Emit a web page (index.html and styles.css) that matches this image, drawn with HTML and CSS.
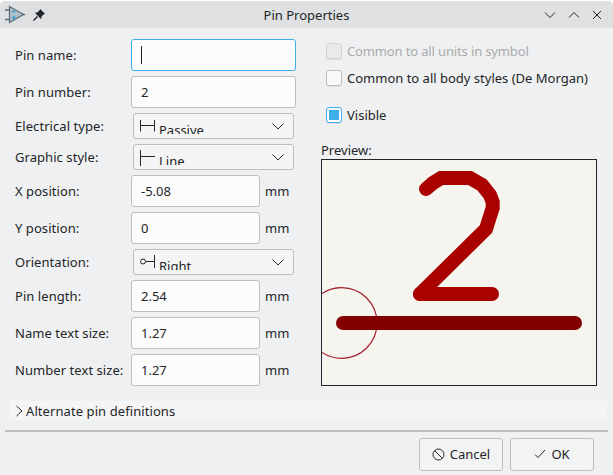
FILE: index.html
```html
<!DOCTYPE html>
<html lang="en">
<head>
  <meta charset="UTF-8" />
  <title>Pin Properties</title>
  <link rel="stylesheet" href="styles.css">
</head>
<body>
<div class="window">
  <div class="titlebar">
    <div class="title-left">
      <svg class="app-icon" width="20" height="20" viewBox="0 0 20 20">
        <path d="M4.5 1.5 L4.5 17.5 L18.5 9.5 Z" fill="#b4c0c8" stroke="#5b6b76" stroke-width="1.3"/>
        <path d="M0 5H4M0 14.5H4M18 9.5H20" stroke="#5b6b76" stroke-width="1.5"/>
        <path d="M7 6.5H10.5M7 12.5H10.5M8.75 10.7V14.3" stroke="#2f9ed8" stroke-width="1.3"/>
      </svg>
      <svg class="pin-icon" width="12" height="12" viewBox="0 0 12 12">
        <path d="M7.2 0 L12 4.8 L10.4 5.6 L8.4 7.8 L8.2 10.2 L1.8 3.8 L4.2 3.6 L6.4 1.6 Z" fill="#232629"/>
        <path d="M4.5 7.5 L0.5 11.5" stroke="#232629" stroke-width="1.4"/>
      </svg>
    </div>
    <div class="title-text">Pin Properties</div>
    <div class="title-btns">
      <svg width="12" height="8" viewBox="0 0 12 8"><path d="M1 1.5 L6 6.5 L11 1.5" class="line"/></svg>
      <svg width="12" height="8" viewBox="0 0 12 8"><path d="M1 6.5 L6 1.5 L11 6.5" class="line"/></svg>
      <svg width="10" height="10" viewBox="0 0 10 10"><path d="M1 1 L9 9 M9 1 L1 9" class="line"/></svg>
    </div>
  </div>

  <div class="content">
    <div class="form">
      <label>Pin name:</label>
      <div class="input wide focus"><span class="caret"></span></div>

      <label>Pin number:</label>
      <div class="input wide">2</div>

      <label>Electrical type:</label>
      <div class="select">
        <svg width="19" height="16" viewBox="0 0 19 16"><path d="M0.5 1V12.5M0.5 6.5H14.5M14.5 1V12.5" class="line"/></svg>
        <span class="select-text">Passive</span>
        <svg class="chev" width="12" height="7" viewBox="0 0 12 7"><path d="M0.5 0.5 L6 6 L11.5 0.5" class="line"/></svg>
      </div>

      <label>Graphic style:</label>
      <div class="select">
        <svg width="19" height="16" viewBox="0 0 19 16"><path d="M0.5 0V16M0.5 6.5H15" class="line"/></svg>
        <span class="select-text">Line</span>
        <svg class="chev" width="12" height="7" viewBox="0 0 12 7"><path d="M0.5 0.5 L6 6 L11.5 0.5" class="line"/></svg>
      </div>

      <label>X position:</label>
      <div class="with-unit"><div class="input">-5.08</div><span>mm</span></div>

      <label>Y position:</label>
      <div class="with-unit"><div class="input">0</div><span>mm</span></div>

      <label>Orientation:</label>
      <div class="select">
        <svg width="19" height="16" viewBox="0 0 19 16"><circle cx="3" cy="6.5" r="2.5" class="line"/><path d="M5.5 6.5H14.5M14.5 0V13" class="line"/></svg>
        <span class="select-text">Right</span>
        <svg class="chev" width="12" height="7" viewBox="0 0 12 7"><path d="M0.5 0.5 L6 6 L11.5 0.5" class="line"/></svg>
      </div>

      <label>Pin length:</label>
      <div class="with-unit"><div class="input">2.54</div><span>mm</span></div>

      <label>Name text size:</label>
      <div class="with-unit"><div class="input">1.27</div><span>mm</span></div>

      <label>Number text size:</label>
      <div class="with-unit"><div class="input">1.27</div><span>mm</span></div>
    </div>

    <div class="side">
      <div class="check disabled"><span class="box"></span>Common to all units in symbol</div>
      <div class="check"><span class="box"></span>Common to all body styles (De Morgan)</div>
      <div class="check visible"><span class="box on"><i></i></span>Visible</div>
      <div class="preview-label">Preview:</div>
      <div class="preview">
        <svg width="275" height="225" viewBox="322 160 275 225">
          <circle cx="341.7" cy="323" r="35.3" fill="none" stroke="#a3202c" stroke-width="1.2"/>
          <path d="M343 323H575" fill="none" stroke="#840000" stroke-width="14" stroke-linecap="round"/>
          <path d="M426 189L433 183L441 178H470L482 185L490 195L492.7 202V208L486 229L420 294" fill="none" stroke="#a90000" stroke-width="14" stroke-linecap="round" stroke-linejoin="miter"/>
          <path d="M420 294H492" fill="none" stroke="#a90000" stroke-width="14" stroke-linecap="round"/>
        </svg>
      </div>
    </div>
  </div>

  <div class="alt-bar">
    <svg width="9" height="12" viewBox="0 0 9 12"><path d="M1.5 1 L7 6 L1.5 11" class="line"/></svg>
    Alternate pin definitions
  </div>
  <div class="sep"></div>

  <div class="buttons">
    <div class="btn">
      <svg width="13" height="13" viewBox="0 0 13 13"><circle cx="6.5" cy="6.5" r="5.5" class="line"/><path d="M2.7 2.7 L10.3 10.3" class="line"/></svg>
      Cancel
    </div>
    <div class="btn">
      <svg width="12" height="10" viewBox="0 0 12 10"><path d="M1 5.5 L4 8.5 L11 1" class="line"/></svg>
      OK
    </div>
  </div>
</div>
</body>
</html>
```

FILE: styles.css
```css
html, body {
  margin: 0;
  padding: 0;
  background: #fff;
}
body {
  width: 613px;
  height: 475px;
  overflow: hidden;
  font-family: "Noto Sans", sans-serif;
  font-size: 13px;
  color: #232629;
}
.window {
  width: 613px;
  height: 474px;
  margin-top: 1px;
  background: #eff0f1;
  border-radius: 5px 5px 0 0;
  overflow: hidden;
}
.line {
  fill: none;
  stroke: #232629;
  stroke-width: 1;
}

.titlebar {
  height: 27px;
  background: #dee0e2;
  display: flex;
  align-items: center;
  justify-content: space-between;
  position: relative;
}
.title-left {
  display: flex;
  align-items: center;
  gap: 8px;
  padding-left: 5px;
}
.title-text {
  position: absolute;
  left: 0;
  right: 0;
  text-align: center;
  font-size: 13px;
}
.title-btns {
  display: flex;
  align-items: center;
  gap: 12px;
  padding-right: 11px;
}

.content {
  display: flex;
  padding-top: 11px;
}
.form {
  display: grid;
  grid-template-columns: 116px 165px;
  row-gap: 5px;
  padding-left: 15px;
  align-items: center;
}
.form label {
  letter-spacing: 0.06px;
}
.input {
  box-sizing: border-box;
  height: 32px;
  width: 129px;
  background: #fcfcfc;
  border: 1px solid #bcbebf;
  border-radius: 3px;
  padding-left: 9px;
  line-height: 30px;
}
.input.wide {
  width: 165px;
}
.input.focus {
  border-color: #3daee9;
  display: flex;
  align-items: center;
}
.caret {
  width: 1px;
  height: 18px;
  background: #232629;
}
.with-unit {
  display: flex;
  align-items: center;
  gap: 5px;
}
.select {
  box-sizing: border-box;
  height: 26px;
  width: 161px;
  margin-left: 2px;
  background: #f5f5f5;
  border: 1px solid #bcbebf;
  border-radius: 3px;
  display: flex;
  align-items: flex-start;
  padding: 5px 9px 0 6px;
  overflow: hidden;
}
.select-text {
  line-height: 19px;
  margin-top: 2px;
  height: 13px;
  overflow: hidden;
}
.chev {
  margin-left: auto;
  margin-top: 4px;
}

.side {
  margin-left: 25px;
  width: 276px;
}
.check {
  display: flex;
  align-items: center;
  gap: 5px;
  height: 16px;
  margin: 4px 0 11px 5px;
  white-space: nowrap;
}
.check.disabled {
  color: #a9abad;
  letter-spacing: -0.14px;
}
.check.visible {
  margin-top: 21px;
}
.box {
  box-sizing: border-box;
  width: 16px;
  height: 16px;
  border: 1px solid #bcbebf;
  border-radius: 3px;
  background: #f8f8f8;
  box-shadow: 0 1px 0 rgba(0, 0, 0, 0.08);
}
.disabled .box {
  background: #e9eaeb;
  border-color: #d2d3d4;
}
.box.on {
  border-color: #3daee9;
  background: #fcfcfc;
  display: flex;
  align-items: center;
  justify-content: center;
}
.box.on i {
  width: 10px;
  height: 10px;
  background: #3daee9;
}
.preview-label {
  margin-top: 18px;
  line-height: 18px;
}
.preview {
  box-sizing: border-box;
  width: 276px;
  height: 227px;
  border: 1px solid #232629;
  background: #f5f4ef;
}
.preview svg {
  display: block;
}

.alt-bar {
  margin: 15px 6px 0 10px;
  height: 19px;
  background: #f5f5f5;
  display: flex;
  align-items: center;
  gap: 2px;
  padding-left: 5px;
  letter-spacing: 0.08px;
}
.sep {
  height: 1.5px;
  margin: 10px 5px 0;
  background: #bcbebf;
}
.buttons {
  display: flex;
  justify-content: flex-end;
  gap: 7px;
  padding: 6px 19px 0 0;
}
.btn {
  box-sizing: border-box;
  width: 84px;
  height: 33px;
  background: #f2f3f3;
  border: 1px solid #bcbebf;
  border-radius: 3px;
  display: flex;
  align-items: center;
  justify-content: center;
  gap: 5px;
}
```
